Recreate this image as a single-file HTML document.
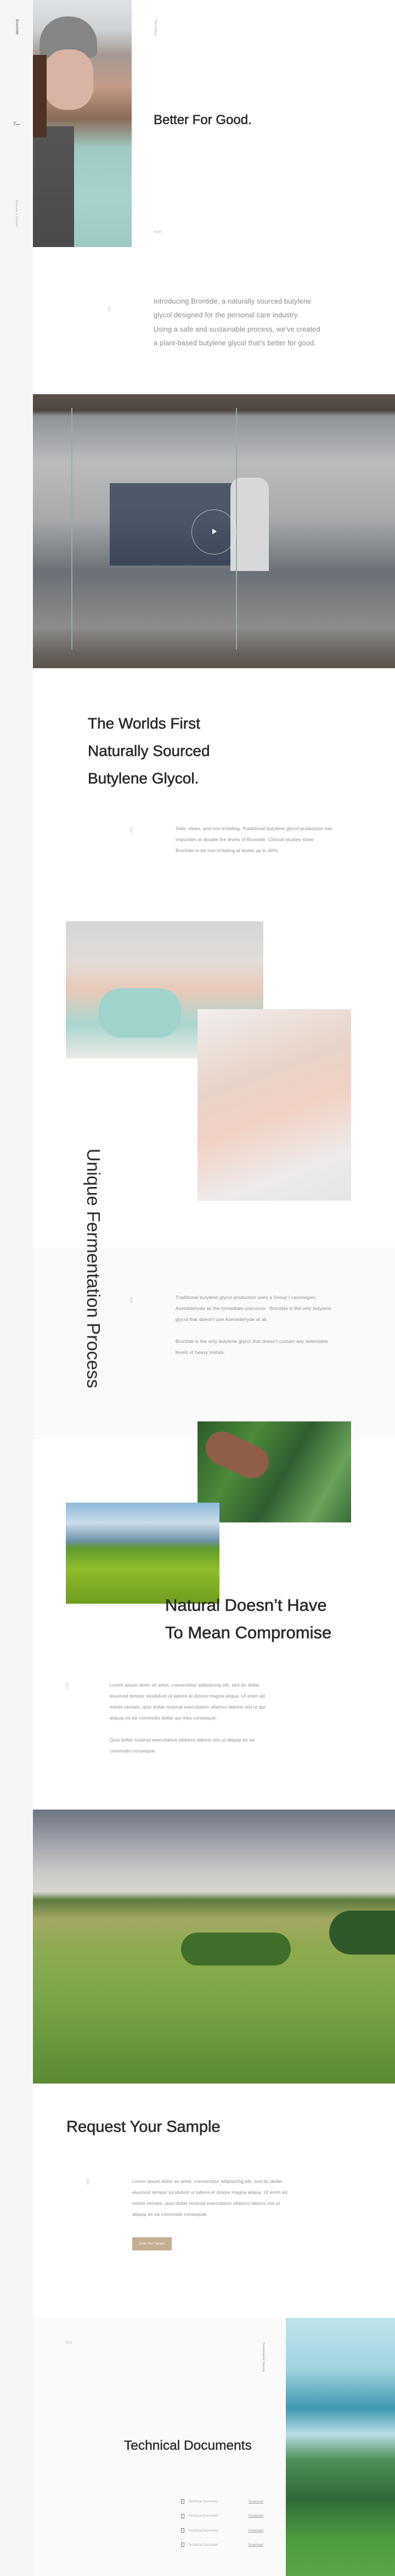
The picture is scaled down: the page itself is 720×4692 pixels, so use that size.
<!DOCTYPE html>
<html><head><meta charset="utf-8">
<style>
*{margin:0;padding:0;box-sizing:border-box}
body{width:720px;height:4692px;position:relative;background:#fff;font-family:"Liberation Sans",Arial,sans-serif;overflow:hidden}
.a{position:absolute}
.h{color:#2b2b2b;-webkit-text-stroke:0.6px #2b2b2b;white-space:nowrap}
.p{color:#8c8c8c;font-size:8.6px;line-height:20px;letter-spacing:0.15px;white-space:nowrap}
.num{color:#bbb;font-size:6px;letter-spacing:0.5px}
.v{transform-origin:0 0;transform:rotate(90deg);white-space:nowrap}
</style></head><body>
<div class="a" style="left:0;top:0;width:60px;height:4692px;background:#f6f6f6"></div>
<div class="a v" style="left:34px;top:35px;font-size:7px;color:#555;letter-spacing:.3px">Brontide</div>
<div class="a" style="left:25px;top:222px;width:5px;height:1px;background:#777"></div>
<div class="a" style="left:28px;top:226px;width:9px;height:1px;background:#777"></div>
<div class="a" style="left:26px;top:222px;width:1px;height:6px;background:#777"></div>
<div class="a v" style="left:33px;top:364px;font-size:5.5px;color:#aaa;letter-spacing:.3px">Request a Sample</div>

<div class="a" style="left:60px;top:0;width:180px;height:450px;background:linear-gradient(180deg,#dfe3e6 0%,#cfd2d4 12%,#a59a93 22%,#c49b88 35%,#8a6a58 48%,#9fcac4 60%,#a6d3cc 80%,#9dc9c2 100%)"></div>
<div class="a" style="left:60px;top:230px;width:75px;height:220px;background:linear-gradient(180deg,#555 0%,#4a4a4a 100%)"></div>
<div class="a" style="left:72px;top:30px;width:105px;height:75px;border-radius:50px 50px 10px 10px;background:#858585"></div>
<div class="a" style="left:80px;top:90px;width:90px;height:110px;border-radius:40px;background:#d9b4a4"></div>
<div class="a" style="left:60px;top:100px;width:25px;height:150px;background:#4e3226"></div>
<div class="a v" style="left:286px;top:35px;font-size:5.5px;color:#999">The Product</div>
<div class="a h" style="left:280px;top:205px;font-size:24px">Better For Good.</div>
<div class="a" style="left:280px;top:420px;font-size:5.5px;color:#aaa">Scroll</div>
<div class="a num v" style="left:201px;top:557px">001</div>
<div class="a" style="left:280px;top:537px;font-size:12.6px;line-height:25.3px;color:#8a8a8a;letter-spacing:.2px;white-space:nowrap">Introducing Brontide, a naturally sourced butylene<br>glycol designed for the personal care industry.<br>Using a safe and sustainable process, we've created<br>a plant-based butylene glycol that's better for good.</div>

<div class="a" style="left:60px;top:718px;width:660px;height:499px;background:linear-gradient(180deg,#5b514a 0%,#4d463f 6%,#8f9396 8%,#b9bbbd 25%,#a8aaac 45%,#6b7078 65%,#8d8c8a 85%,#6a6560 94%,#5a5048 100%)"></div>
<div class="a" style="left:200px;top:880px;width:270px;height:150px;background:#23324a;opacity:.7"></div>
<div class="a" style="left:420px;top:870px;width:70px;height:170px;background:#d8d8da;border-radius:20px 20px 0 0"></div>
<div class="a" style="left:130px;top:743px;width:2px;height:440px;background:#9aa"></div>
<div class="a" style="left:430px;top:743px;width:2px;height:440px;background:#9aa"></div>
<div class="a" style="left:349px;top:928px;width:82px;height:82px;border:1px solid rgba(255,255,255,.6);border-radius:50%"></div>
<div class="a" style="left:387px;top:963px;width:0;height:0;border-left:8px solid #fff;border-top:5px solid transparent;border-bottom:5px solid transparent"></div>

<div class="a h" style="left:160px;top:1293px;font-size:28px;line-height:50px">The Worlds First<br>Naturally Sourced<br>Butylene Glycol.</div>
<div class="a num v" style="left:241px;top:1506px">002</div>
<div class="a p" style="left:320px;top:1499px">Safe, clean, and non-irritating. Traditional butylene glycol production has<br>impurities at double the levels of Brontide. Clinical studies show<br>Brontide to be non-irritating at levels up to 40%.</div>

<div class="a" style="left:120px;top:1678px;width:360px;height:250px;background:linear-gradient(180deg,#d6d6d8 0%,#e2dcd8 30%,#e8c9b8 50%,#a9d6cf 75%,#ece9e6 100%)"></div>
<div class="a" style="left:180px;top:1800px;width:150px;height:90px;border-radius:40px;background:#9fd3cb"></div>
<div class="a" style="left:360px;top:1838px;width:280px;height:349px;background:linear-gradient(160deg,#f0eeee 0%,#e8d3c8 35%,#f1d2c4 55%,#eeeaea 80%,#e6e4e4 100%)"></div>
<div class="a" style="left:60px;top:2272px;width:660px;height:349px;background:#fafafa"></div>
<div class="a v h" style="left:189px;top:2092px;font-size:33px;-webkit-text-stroke:0;color:#2b2b2b">Unique Fermentation Process</div>
<div class="a num v" style="left:241px;top:2362px">003</div>
<div class="a p" style="left:320px;top:2353px">Traditional butylene glycol production uses a Group I carcinogen,<br>Acetaldehyde as the immediate precursor.&nbsp; Brontide is the only butylene<br>glycol that doesn't use Acetaldehyde at all.<br><br style="line-height:0">Brontide is the only butylene glycol that doesn't contain any detectable<br>levels of heavy metals.</div>

<div class="a" style="left:360px;top:2589px;width:280px;height:184px;background:linear-gradient(120deg,#2d5a2a 0%,#4c8a3a 30%,#2e5e30 55%,#6aa35a 80%,#3a6d3a 100%)"></div>
<div class="a" style="left:372px;top:2620px;width:120px;height:60px;border-radius:30px;background:#8e5e48;transform:rotate(25deg)"></div>
<div class="a" style="left:120px;top:2737px;width:280px;height:184px;background:linear-gradient(180deg,#8fb8d8 0%,#c9dceb 20%,#6f93a8 38%,#5f9a2c 45%,#8fbd2a 65%,#6f9c1e 100%)"></div>
<div class="a h" style="left:301px;top:2899px;font-size:31px;line-height:50px">Natural Doesn’t Have<br>To Mean Compromise</div>
<div class="a num v" style="left:124px;top:3065px">003</div>
<div class="a p" style="left:200px;top:3059px">Lorem ipsum dolor sit amet, consectetur adipisicing elit, sed do dollar<br>eiusmod tempor incididunt ut labore et dolore magna aliqua. Ut enim ad<br>minim veniam, quis dollar nostrud exercitation ullamco laboris nisi ut qui<br>aliquip ex ea commodo dollar qui mes consequat.<br><br>Quis dollar nostrud exercitation ullamco laboris nisi ut aliquip ex ea<br>commodo consequat.</div>

<div class="a" style="left:60px;top:3296px;width:660px;height:499px;background:linear-gradient(180deg,#6e7480 0%,#9ea3ab 12%,#c8c6c4 22%,#d8d6d0 30%,#5d7a3e 33%,#a3a862 40%,#8cab4e 52%,#79a445 70%,#5c8a32 100%)"></div>
<div class="a" style="left:330px;top:3520px;width:200px;height:60px;border-radius:30px;background:#3f6e2a"></div>
<div class="a" style="left:600px;top:3480px;width:120px;height:80px;border-radius:40px 0 0 40px;background:#30582a"></div>
<div class="a h" style="left:121px;top:3858px;font-size:29px">Request Your Sample</div>
<div class="a num v" style="left:162px;top:3968px">004</div>
<div class="a p" style="left:241px;top:3963px">Lorem ipsum dolor sit amet, consectetur adipisicing elit, sed do dollar<br>eiusmod tempor incididunt ut labore et dolore magna aliqua. Ut enim ad<br>minim veniam, quis dollar nostrud exercitation ullamco laboris nisi ut<br>aliquip ex ea commodo consequat.</div>
<div class="a" style="left:241px;top:4075px;width:72px;height:24px;background:#c4ae93;color:#fff;font-size:5.5px;line-height:24px;text-align:center">Order Your Sample</div>

<div class="a" style="left:60px;top:4222px;width:461px;height:470px;background:#fafafa"></div>
<div class="a" style="left:521px;top:4222px;width:199px;height:470px;background:linear-gradient(180deg,#bfe4ec 0%,#9fd3e0 20%,#3e98b0 35%,#b8dee6 45%,#4f8f5a 55%,#2f6a38 70%,#4d9a40 85%,#5aa545 100%)"></div>
<div class="a num" style="left:120px;top:4265px">005</div>
<div class="a v" style="left:483px;top:4267px;font-size:5.5px;color:#999">Sustainability Reports</div>
<div class="a h" style="left:226px;top:4441px;font-size:24.5px;-webkit-text-stroke:0.4px #2b2b2b">Technical Documents</div>
<div class="a" style="left:330px;top:4544px;font-size:6px;line-height:26.3px;color:#aaa;white-space:nowrap">
<div><span style="display:inline-block;width:6px;height:8px;border:1px solid #777;vertical-align:middle;margin-right:7px"></span>Technical Document</div>
<div><span style="display:inline-block;width:6px;height:8px;border:1px solid #777;vertical-align:middle;margin-right:7px"></span>Technical Document</div>
<div><span style="display:inline-block;width:6px;height:8px;border:1px solid #777;vertical-align:middle;margin-right:7px"></span>Technical Document</div>
<div><span style="display:inline-block;width:6px;height:8px;border:1px solid #777;vertical-align:middle;margin-right:7px"></span>Technical Document</div>
</div>
<div class="a" style="left:453px;top:4544px;font-size:6px;line-height:26.3px;color:#999;text-decoration:underline">Download<br>Download<br>Download<br>Download</div>
</body></html>
